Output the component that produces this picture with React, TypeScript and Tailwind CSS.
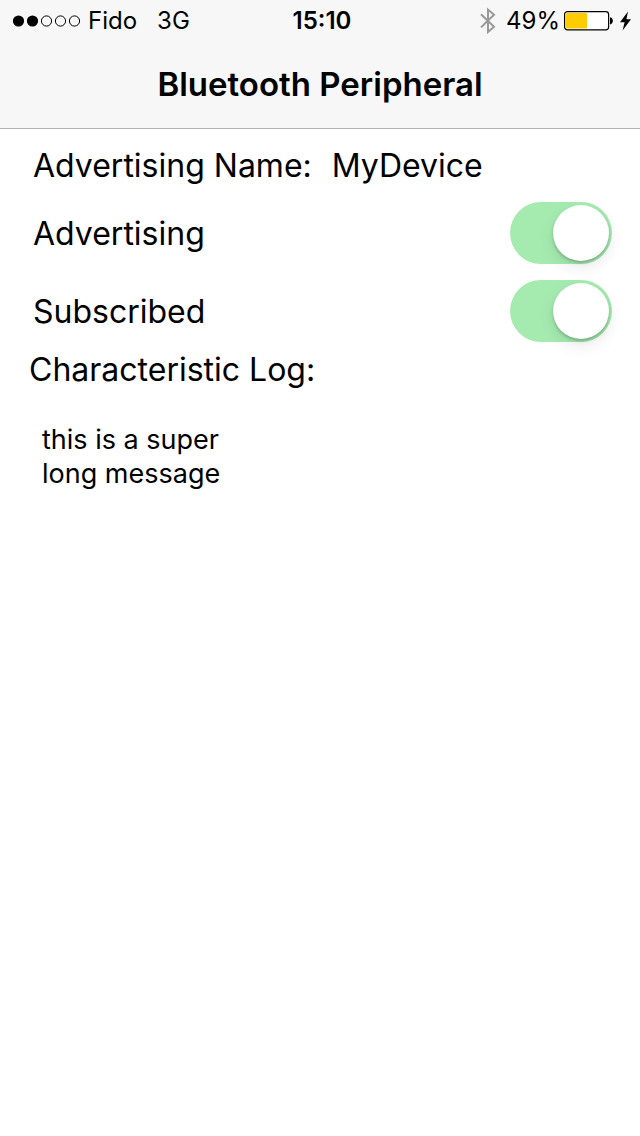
import { useState } from "react";

const SIGNAL_STRENGTH = 2;

function SignalDots() {
  return (
    <svg width="68" height="12" viewBox="0 0 68 12" role="img" aria-label="Signal strength">
      {[0, 1, 2, 3, 4].map((i) => (
        <circle
          key={i}
          cx={6.5 + i * 14}
          cy="6"
          r={i < SIGNAL_STRENGTH ? 5.6 : 5.1}
          fill={i < SIGNAL_STRENGTH ? "#000" : "none"}
          stroke={i < SIGNAL_STRENGTH ? "none" : "#000"}
          strokeWidth="1"
        />
      ))}
    </svg>
  );
}

function BluetoothIcon() {
  return (
    <svg width="16" height="28" viewBox="0 0 16 28" fill="none" stroke="#999" strokeWidth="2" role="img" aria-label="Bluetooth">
      <path d="M1 7.2 L14 19.8 L8 25 V2.6 L14 7.8 L1 20.4" />
    </svg>
  );
}

function BatteryIcon() {
  return (
    <svg width="50" height="20" viewBox="0 0 50 20" role="img" aria-label="Battery">
      <rect x="0.6" y="0.6" width="44" height="18.2" rx="2.8" fill="#fff" stroke="#000" strokeWidth="1.2" />
      <rect x="2" y="2" width="21" height="15.4" rx="1" fill="#fc0" />
      <path d="M46 6.2 C49.8 7 49.8 12.6 46 13.4 Z" fill="#000" />
    </svg>
  );
}

function BoltIcon() {
  return (
    <svg width="12" height="20" viewBox="0 0 12 20" role="img" aria-label="Charging">
      <path d="M8 0.4 L0 11.2 H4.6 L2.6 19.4 L11 8.2 H6.4 Z" fill="#000" />
    </svg>
  );
}

function StatusBar() {
  return (
    <div className="grid h-10 grid-cols-[1fr_auto_1fr] items-center pt-0.5 pr-2 pl-3 text-2xl">
      <div className="flex items-center">
        <SignalDots />
        <span className="ml-2">Fido</span>
        <span className="ml-5">3G</span>
      </div>
      <time className="font-semibold">15:10</time>
      <div className="flex items-center justify-end">
        <BluetoothIcon />
        <span className="mr-1 ml-2.5">49%</span>
        <BatteryIcon />
        <span className="ml-1.5 flex">
          <BoltIcon />
        </span>
      </div>
    </div>
  );
}

function SwitchRow({ id, label }: { id: string; label: string }) {
  const [on, setOn] = useState(true);
  return (
    <div className="flex items-center justify-between">
      <label htmlFor={id} className="pt-0.5">
        {label}
      </label>
      <input
        id={id}
        type="checkbox"
        role="switch"
        checked={on}
        onChange={(e) => setOn(e.target.checked)}
        className="h-[62px] w-[102px] shrink-0 appearance-none rounded-full bg-[#e5e5e5] p-[3px] before:block before:size-14 before:rounded-full before:bg-white before:shadow-[0_6px_16px_rgba(0,0,0,0.1),0_2px_3px_rgba(0,0,0,0.2)] before:transition-transform checked:bg-[#a5ebb0] checked:before:translate-x-10"
      />
    </div>
  );
}

export default function App() {
  return (
    <div className="min-h-screen bg-white font-['Inter',sans-serif] text-black">
      <header className="border-b border-[#b2b2b2] bg-[#f7f7f7]">
        <StatusBar />
        <h1 className="flex h-[88px] items-center justify-center pt-0.5 text-[33px] font-semibold">
          Bluetooth Peripheral
        </h1>
      </header>
      <main className="pr-7 pl-[33px] text-[32px] leading-10">
        <p className="flex gap-5 pt-[17px] pb-4">
          <span>Advertising Name:</span>
          <span>MyDevice</span>
        </p>
        <div className="flex flex-col gap-4">
          <SwitchRow id="advertising" label="Advertising" />
          <SwitchRow id="subscribed" label="Subscribed" />
        </div>
        <section className="-ml-1 pt-2">
          <h2>Characteristic Log:</h2>
          <p className="px-[13px] pt-[33px] text-[27px] leading-[34px] whitespace-pre-line">
            {"this is a super\nlong message"}
          </p>
        </section>
      </main>
    </div>
  );
}
